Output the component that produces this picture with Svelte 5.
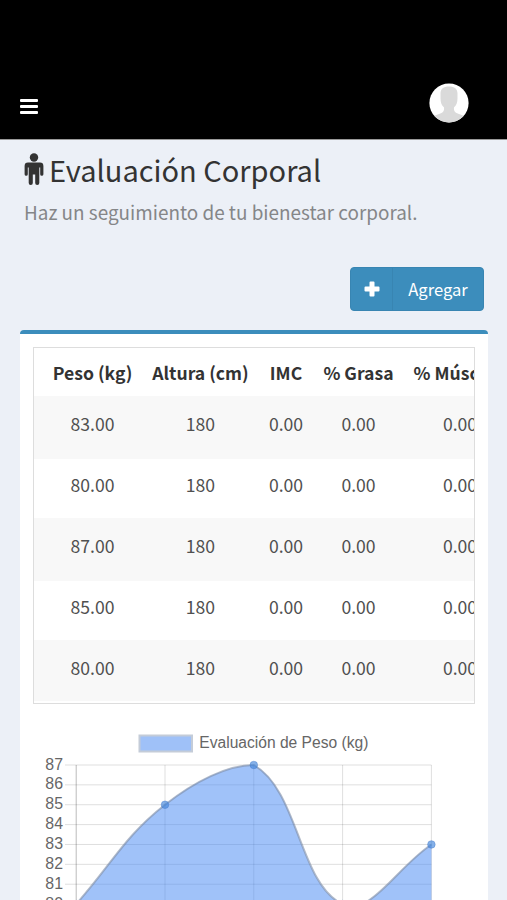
<script>
    const columns = [
        { label: 'Peso (kg)', width: 108 },
        { label: 'Altura (cm)', width: 117 },
        { label: 'IMC', width: 54 },
        { label: '% Grasa', width: 91 },
        { label: '% Músculo', width: 112 },
    ]

    const rows = [
        ['83.00', '180', '0.00', '0.00', '0.00'],
        ['80.00', '180', '0.00', '0.00', '0.00'],
        ['87.00', '180', '0.00', '0.00', '0.00'],
        ['85.00', '180', '0.00', '0.00', '0.00'],
        ['80.00', '180', '0.00', '0.00', '0.00'],
    ]

    // chart, oldest measurement first
    const weights = [80, 85, 87, 80, 83]
    const ticks = [87, 86, 85, 84, 83, 82, 81, 80]
    const tension = 0.4
    const left = 43.2
    const top = 35
    const stepX = 88.8
    const stepY = 19.87
    const bottom = 240

    const y = (value) => top + (87 - value) * stepY
    const points = weights.map((w, i) => ({ x: left + i * stepX, y: y(w) }))
    const right = points[points.length - 1].x

    function controls(i) {
        const p = points[i]
        const prev = points[i - 1] || p
        const next = points[i + 1] || p
        const d01 = Math.hypot(p.x - prev.x, p.y - prev.y)
        const d12 = Math.hypot(next.x - p.x, next.y - p.y)
        const fa = tension * d01 / (d01 + d12)
        const fb = tension * d12 / (d01 + d12)
        const cap = (v) => Math.max(top, v)
        return {
            before: `${p.x - fa * (next.x - prev.x)} ${cap(p.y - fa * (next.y - prev.y))}`,
            after: `${p.x + fb * (next.x - prev.x)} ${cap(p.y + fb * (next.y - prev.y))}`,
        }
    }

    let line = `M${points[0].x} ${points[0].y}`
    for (let i = 1; i < points.length; i++) {
        line += ` C${controls(i - 1).after} ${controls(i).before} ${points[i].x} ${points[i].y}`
    }
    const area = `${line} V${bottom} H${left} Z`
</script>

<div class="page">
    <header>
        <button class="toggle" aria-label="Menú"><i></i><i></i><i></i></button>
        <svg class="avatar" viewBox="0 0 40 40">
            <defs><clipPath id="round"><circle cx="20" cy="20" r="19.6"/></clipPath></defs>
            <circle cx="20" cy="20" r="19.6" fill="#fff"/>
            <path clip-path="url(#round)" fill="#dadada" d="M20 3.500c-5.500 0-8.500 2.500-8.500 7v5c0 4 1.200 7 3.400 8.800.6 2.600-.3 4.600-2.400 5.700C9.500 31.500 5 32 3 35v6h34v-6c-2-3-6.500-3.500-9.500-5-2.100-1.100-3-3.100-2.400-5.700 2.200-1.800 3.400-4.800 3.400-8.800v-5c0-4.500-3-7-8.500-7z"/>
        </svg>
    </header>

    <section class="heading">
        <h1>
            <svg viewBox="0 0 20 33" width="20" height="33">
                <circle cx="10" cy="4.500" r="4.200"/>
                <path d="M4 9.500h12q3.400 0 3.400 3.400v8.300a1.600 1.600 0 0 1-3.200 0v-6.700h-.9V30a2.050 2.050 0 0 1-4.100 0v-8.500H8.800V30a2.050 2.050 0 0 1-4.100 0V14.500h-.9v6.700a1.600 1.600 0 0 1-3.200 0v-8.300Q.6 9.500 4 9.500z"/>
            </svg>
            <span>Evaluación Corporal</span>
        </h1>
        <p>Haz un seguimiento de tu bienestar corporal.</p>
    </section>

    <div class="actions">
        <button class="add">
            <span class="plus">
                <svg viewBox="0 0 16 16" width="16" height="16"><path d="M6.500.5h3q1 0 1 1v4h4q1 0 1 1v3q0 1-1 1h-4v4q0 1-1 1h-3q-1 0-1-1v-4h-4q-1 0-1-1v-3q0-1 1-1h4v-4q0-1 1-1z"/></svg>
            </span>
            <span class="label">Agregar</span>
        </button>
    </div>

    <main class="box">
        <div class="table-wrap">
            <table>
                <colgroup>
                    {#each columns as column}
                        <col style="width: {column.width}px"/>
                    {/each}
                </colgroup>
                <thead>
                    <tr>
                        {#each columns as column}<th>{column.label}</th>{/each}
                    </tr>
                </thead>
                <tbody>
                    {#each rows as row}
                        <tr>
                            {#each row as cell}<td>{cell}</td>{/each}
                        </tr>
                    {/each}
                </tbody>
            </table>
        </div>

        <svg class="chart" viewBox="0 0 441 220" width="441" height="220">
            <rect class="swatch" x="106.500" y="5.500" width="52.500" height="16"/>
            <text class="legend" x="166.300" y="18.300">Evaluación de Peso (kg)</text>

            {#each ticks as tick}
                <line class="grid" x1="32" x2={right} y1={y(tick)} y2={y(tick)}/>
                <text class="tick" x="30" y={y(tick) + 4.5}>{tick}</text>
            {/each}
            {#each points as point, i}
                <line class="grid" class:axis={i === 0} x1={point.x} x2={point.x} y1={top} y2={bottom}/>
            {/each}

            <path class="area" d={area}/>
            <path class="curve" d={line}/>
            {#each points as point}
                <circle class="dot" cx={point.x} cy={point.y} r="3.800"/>
            {/each}
        </svg>
    </main>
</div>

<style>
    :global(body) {
        background: #ecf0f7;
    }

    .page {
        height: 900px;
        overflow: hidden;
        background: #ecf0f7;
        color: #333;
        font-family: "Noto Sans CJK SC", "Noto Sans", sans-serif;
    }

    header {
        box-sizing: border-box;
        height: 140px;
        padding: 83px 38px 0 20px;
        border-bottom: 1px solid #999;
        background: #000;
        display: flex;
        justify-content: space-between;
    }
    .toggle {
        width: 18px;
        height: 15px;
        margin: 16px 0 0;
        padding: 0;
        border: 0;
        background: none;
        display: flex;
        flex-direction: column;
        justify-content: space-between;
    }
    .toggle i {
        height: 3px;
        border-radius: 1px;
        background: #fff;
    }
    .avatar {
        width: 40px;
        height: 40px;
    }

    .heading {
        height: 127px;
        padding: 0 24px;
        box-sizing: border-box;
    }
    h1 {
        margin: 0;
        padding-top: 8px;
        height: 42px;
        display: flex;
        align-items: center;
        gap: 5px;
        font-size: 29px;
        font-weight: 400;
        line-height: 42px;
        white-space: nowrap;
    }
    h1 svg {
        fill: #333;
        flex: none;
    }
    p {
        margin: 8px 0 0;
        color: #858688;
        font-size: 18.900px;
        line-height: 28px;
        white-space: nowrap;
    }

    .actions {
        display: flex;
        justify-content: flex-end;
        padding-right: 23px;
    }
    .add {
        width: 134px;
        height: 44px;
        padding: 0;
        border: 1px solid #3885b2;
        border-radius: 4px;
        background: #3c8dbc;
        color: #fff;
        display: flex;
        align-items: stretch;
        font-family: inherit;
        font-size: 16.600px;
    }
    .plus {
        width: 41px;
        border-right: 1px solid #3885b2;
        display: flex;
        align-items: center;
        justify-content: center;
    }
    .plus svg {
        fill: #fff;
    }
    .label {
        flex: 1;
        line-height: 42px;
        text-align: center;
    }

    .box {
        height: 620px;
        margin: 19px 19px 0 20px;
        padding: 13px 13px 0;
        border-top: 4px solid #3c8dbc;
        border-radius: 4px;
        background: #fff;
    }
    .table-wrap {
        box-sizing: border-box;
        width: 442px;
        height: 357px;
        border: 1px solid #ddd;
        overflow: hidden;
    }
    table {
        width: 482px;
        table-layout: fixed;
        border-collapse: separate;
        border-spacing: 0;
        font-size: 17.600px;
    }
    th, td {
        box-sizing: border-box;
        padding: 0;
        text-align: center;
        white-space: nowrap;
        line-height: 26px;
    }
    th {
        height: 48px;
        padding-top: 2px;
        font-weight: 700;
    }
    td {
        height: 61px;
        padding-bottom: 8px;
        border-top: 2px solid #f8f8f8;
        color: #505050;
    }
    th:first-child, td:first-child {
        padding-left: 9px;
    }
    tbody tr:nth-child(odd) {
        background: #f8f8f8;
    }

    .chart {
        display: block;
        margin-top: 26px;
        font-family: "Liberation Sans", Arial, sans-serif;
    }
    .swatch {
        fill: #9fc1f8;
        stroke: #c4ccd8;
        stroke-width: 2;
    }
    .legend, .tick {
        fill: #666;
        font-size: 15.900px;
    }
    .legend {
        font-size: 15.600px;
    }
    .tick {
        text-anchor: end;
    }
    .grid {
        stroke: rgba(0, 0, 0, 0.13);
    }
    .grid.axis {
        stroke: rgba(0, 0, 0, 0.27);
    }
    .area {
        fill: rgba(66, 133, 244, 0.5);
    }
    .curve {
        fill: none;
        stroke: rgba(125, 140, 165, 0.6);
        stroke-width: 2;
    }
    .dot {
        fill: rgba(66, 133, 220, 0.65);
        stroke: rgba(66, 120, 200, 0.4);
    }
</style>
